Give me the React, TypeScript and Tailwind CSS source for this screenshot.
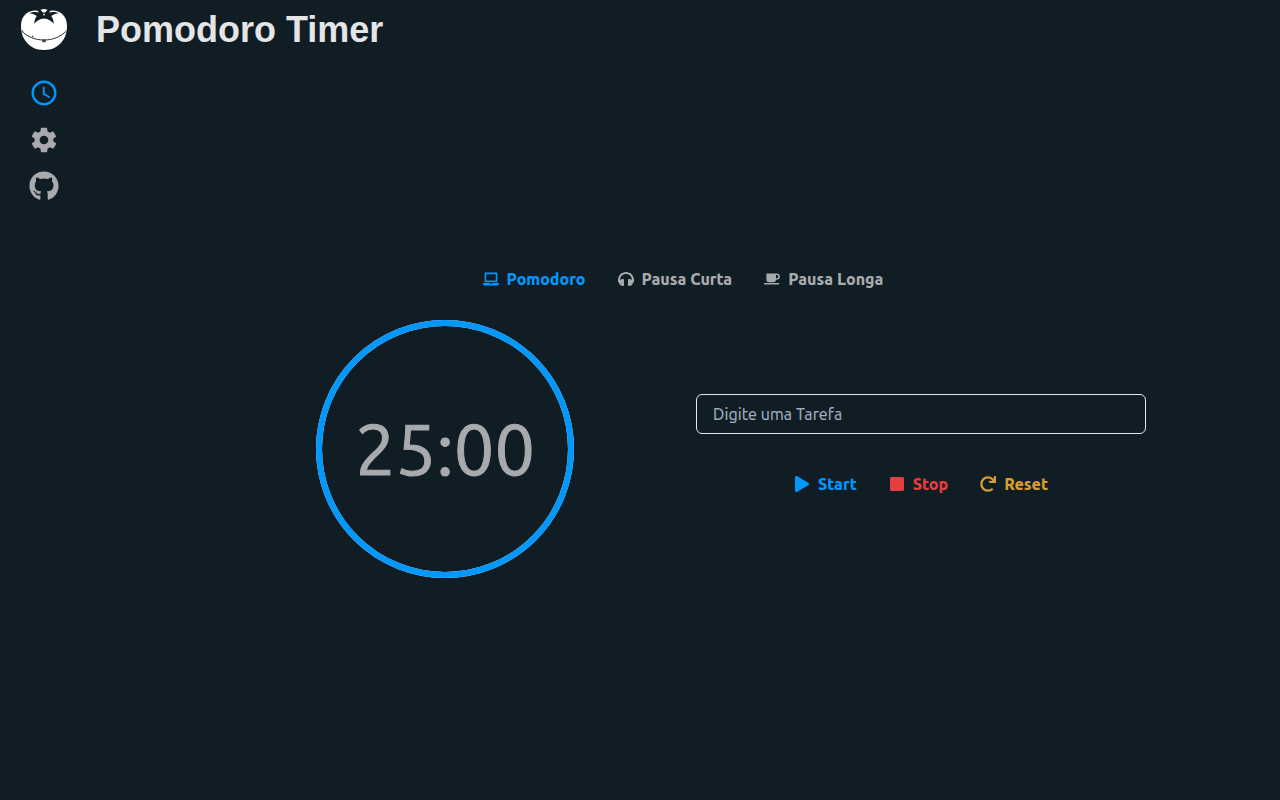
import type { ReactNode } from "react";
import { FaCoffee, FaGithub, FaHeadphones, FaLaptop, FaPlay, FaRedo, FaStop } from "react-icons/fa";
import { IoMdSettings } from "react-icons/io";
import { MdAccessTime } from "react-icons/md";

function TomatoLogo() {
  return (
    <svg width="46" height="42" viewBox="0 0 46 42" aria-hidden="true">
      <path
        d="M16 1.500C7 1 0 6.500 0 17C0 22 1 26.500 3.500 30.500C8 38 15 41 23 41S38 38 42.500 30.500C45 26.500 46 22 46 17C46 6.500 39 1 30 1.500C26 0 20 0 16 1.500Z"
        fill="#fff"
      />
      <path
        d="M8 4.300C11.500 2.600 15 2.600 18 3.500C17.300 2.400 16.500 1.500 15 .5L19 0L21.500 3.300L23 3.500L24.500 3.300L27 0L31 .5C29.500 1.500 28.700 2.400 28 3.500C31 2.600 34.500 2.600 38 4.300C35 4.600 32.500 5.400 30.200 7C31.700 9 32.600 11.500 32.800 14.800C30 11.800 27.500 9.800 23 9.500C18.500 9.800 16 11.800 13.200 14.800C13.400 11.500 14.300 9 15.800 7C13.500 5.400 11 4.600 8 4.300Z"
        fill="#111d24"
      />
      <path d="M21 .3H25L23.800 3H22.200ZM22.400 4.500H23.600V6.600H22.400Z" fill="#fff" />
      <path d="M.5 22C7 28 14 31 23 31S39 28 45.500 22" fill="none" stroke="#111d24" strokeWidth=".9" />
      <path d="M21.300 30.600H24.700V33.200H21.300ZM10.800 27.800L11.800 26.200L12.600 28.600ZM1 21L2.500 22.400L1.500 23.500Z" fill="#34404a" />
    </svg>
  );
}

function IconButton({ icon, color, children }: { icon: ReactNode; color: string; children: string }) {
  return (
    <button className={`flex h-10 items-center gap-2 text-base font-extrabold ${color}`}>
      <span className="flex w-4 justify-center">{icon}</span>
      <span>{children}</span>
    </button>
  );
}

export default function App() {
  return (
    <div className="flex h-screen flex-col overflow-hidden bg-[#111d24] font-[Ubuntu,'Noto_Sans',sans-serif]">
      <header className="flex h-[60px] items-center">
        <div className="flex w-24 shrink-0 pl-[21px]">
          <TomatoLogo />
        </div>
        <h1 className="font-['Liberation_Sans',sans-serif] text-4xl font-bold text-[#e4e5e7]">Pomodoro Timer</h1>
      </header>
      <div className="flex flex-1">
        <nav className="flex w-[88px] shrink-0 flex-col items-center gap-4 pt-[18px] text-[#a8aaad]">
          <MdAccessTime size={30} className="mb-px text-[#0098fd]" />
          <IoMdSettings size={30} />
          <FaGithub size={30} />
        </nav>
        <main className="flex flex-1 flex-col pt-[199px]">
          <div className="flex justify-center gap-8 pr-[2px]">
            <IconButton color="text-[#0098fd]" icon={<FaLaptop />}>Pomodoro</IconButton>
            <IconButton color="text-[#a8aaad]" icon={<FaHeadphones />}>Pausa Curta</IconButton>
            <IconButton color="text-[#a8aaad]" icon={<FaCoffee />}>Pausa Longa</IconButton>
          </div>
          <div className="mt-[21px] flex h-[258px] pl-[228px]">
            <div className="grid size-[258px] shrink-0 place-items-center">
              <svg className="col-start-1 row-start-1" width="258" height="258" viewBox="0 0 258 258">
                <circle cx="129" cy="129" r="126" fill="none" stroke="#edebe9" strokeWidth="6" />
                <circle cx="129" cy="129" r="126" fill="none" stroke="#0098fd" strokeWidth="6" />
              </svg>
              <span className="col-start-1 row-start-1 text-7xl leading-none text-[#a8aaad] [-webkit-text-stroke:1px_#a8aaad]">25:00</span>
            </div>
            <div className="ml-[122px] flex w-[450px] flex-col pt-[74px]">
              <input
                className="h-10 w-full shrink-0 rounded-md border border-[#e2e8f0] bg-transparent px-4 text-base tracking-[0.1px] outline-none placeholder:text-[#a0aec0] placeholder:[-webkit-text-stroke:0.2px_#a0aec0]"
                placeholder="Digite uma Tarefa"
              />
              <div className="mt-[30px] flex justify-center gap-8">
                <IconButton color="text-[#0098fd]" icon={<FaPlay />}>Start</IconButton>
                <IconButton color="text-[#e53e3e]" icon={<FaStop />}>Stop</IconButton>
                <IconButton color="text-[#d69e2e]" icon={<FaRedo />}>Reset</IconButton>
              </div>
            </div>
          </div>
        </main>
      </div>
    </div>
  );
}
